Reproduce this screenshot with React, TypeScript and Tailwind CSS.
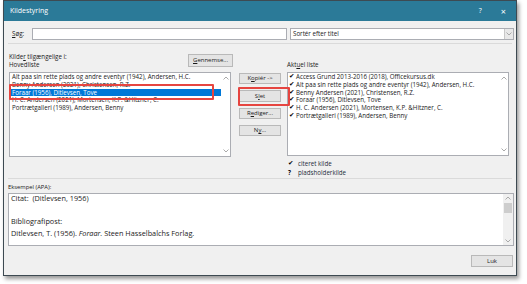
import React from 'react'

const sources = [
  'Alt paa sin rette plads og andre eventyr (1942), Andersen, H.C.',
  'Benny Andersen (2021), Christensen, R.Z.',
  'Foraar (1956), Ditlevsen, Tove',
  'H. C. Andersen (2021), Mortensen, K.P. &Hitzner, C.',
  'Portrætgalleri (1989), Andersen, Benny',
]

const current = [
  'Access Grund 2013-2016 (2018), Officekursus.dk',
  'Alt paa sin rette plads og andre eventyr (1942), Andersen, H.C.',
  'Benny Andersen (2021), Christensen, R.Z.',
  'Foraar (1956), Ditlevsen, Tove',
  'H. C. Andersen (2021), Mortensen, K.P. &Hitzner, C.',
  'Portrætgalleri (1989), Andersen, Benny',
]

const font = { fontFamily: '"Open Sans", "Noto Sans", sans-serif' }
const dejavu = { fontFamily: '"DejaVu Sans", sans-serif' }

function Chevron({ up = false }: { up?: boolean }) {
  return (
    <svg width="6" height="4" viewBox="0 0 6 4" className="block">
      <path
        d={up ? 'M0.5 3.5 L3 1 L5.5 3.5' : 'M0.5 0.5 L3 3 L5.5 0.5'}
        fill="none"
        stroke="#a0a0a0"
        strokeWidth="0.9"
      />
    </svg>
  )
}

function Btn({ children, className = '' }: { children: React.ReactNode; className?: string }) {
  return (
    <div
      className={`flex items-center justify-center border border-[#b9b9b9] bg-[#e4e4e4] text-[6px] text-[#1a1a1a] ${className}`}
    >
      {children}
    </div>
  )
}

function ScrollCol() {
  return (
    <div className="flex w-[8px] flex-col items-center justify-between py-[3px]">
      <Chevron up />
      <Chevron />
    </div>
  )
}

export default function App() {
  return (
    <div className="h-[284px] w-[527px] bg-white" style={font}>
      <div className="relative ml-[3px] flex h-[276px] w-[514px] flex-col border border-[#3d4a52] bg-[#f0f0f0] shadow-[2px_3px_4px_rgba(0,0,0,0.4)]">
        {/* title bar */}
        <div className="flex h-[20px] items-center bg-[#2b7a98] pl-[6px] pr-[10px] text-white">
          <span className="text-[7px]">Kildestyring</span>
          <span className="ml-auto text-[7px]">?</span>
          <span className="ml-[19px] text-[9px] leading-none">×</span>
        </div>

        {/* search row */}
        <div className="mt-[7px] flex h-[12px] items-stretch pl-[8px] pr-[2px]">
          <span className="flex w-[20px] items-center text-[6.2px] text-[#1a1a1a]">
            <span className="underline">S</span>øg:
          </span>
          <div className="w-[255px] border border-[#abadb3] bg-white" />
          <div className="ml-[3px] flex w-[224px] items-center border border-[#abadb3] bg-white">
            <span className="pl-[2px] text-[6.2px] text-[#1a1a1a]">Sortér efter titel</span>
            <div className="ml-auto flex h-full w-[9px] items-center justify-center border-l border-[#c8c8c8] bg-[#e8e8e8]">
              <Chevron />
            </div>
          </div>
        </div>

        <div className="mx-[4px] mt-[3px] h-px bg-[#dadada]" />

        {/* lists */}
        <div className="mt-[9px] flex text-[6.2px] text-[#1a1a1a]">
          <div className="ml-[5px] w-[222px]">
            <div className="flex h-[19px] items-start">
              <div className="leading-[8px]">
                <div>
                  Kilde<span className="underline">r</span> tilgængelige i:
                </div>
                <div>Hovedliste</div>
              </div>
              <Btn className="-mr-[2px] ml-auto mt-[1px] h-[13px] w-[45px]">
                <span>
                  <span className="underline">G</span>ennemse...
                </span>
              </Btn>
            </div>
            <div className="flex h-[85px] border border-[#abadb3] bg-white">
              <div className="flex-1 px-[1px] leading-[7.75px]">
                {sources.map((s, i) => (
                  <div
                    key={s}
                    className={`whitespace-nowrap pl-[1px] ${i === 2 ? 'bg-[#0078d7] text-white' : ''}`}
                  >
                    {s}
                  </div>
                ))}
              </div>
              <ScrollCol />
            </div>
          </div>

          <div className="ml-[8px] flex w-[42px] flex-col gap-[6px] pt-[20px]">
            <Btn className="h-[11px]">
              <span>
                K<span className="underline">o</span>piér -&gt;
              </span>
            </Btn>
            <Btn className="h-[12px]">
              <span>
                S<span className="underline">l</span>et
              </span>
            </Btn>
            <Btn className="h-[11px]">
              <span>
                R<span className="underline">e</span>diger...
              </span>
            </Btn>
            <Btn className="h-[11px]">
              <span>
                N<span className="underline">y</span>...
              </span>
            </Btn>
          </div>

          <div className="ml-[6px] w-[222px]">
            <div className="h-[19px] pt-[8px] leading-[8px]">
              Akt<span className="underline">u</span>el liste
            </div>
            <div className="flex h-[84px] border border-[#abadb3] bg-white">
              <div className="flex-1 pl-[1px] leading-[7.75px]">
                {current.map((s) => (
                  <div key={s} className="flex whitespace-nowrap">
                    <span className="w-[7px] text-[6.5px] font-bold text-black" style={dejavu}>
                      ✔
                    </span>
                    <span>{s}</span>
                  </div>
                ))}
              </div>
              <ScrollCol />
            </div>
            <div className="mt-[3px] leading-[9px] text-[#1d2b3a]">
              <div className="flex">
                <span className="w-[11px] pl-[1px] text-[6.5px] font-bold text-black" style={dejavu}>
                  ✔
                </span>
                <span>citeret kilde</span>
              </div>
              <div className="flex">
                <span className="w-[11px] pl-[1px] font-bold text-black">?</span>
                <span>pladsholderkilde</span>
              </div>
            </div>
          </div>
        </div>

        <div className="mx-[4px] mt-[1px] h-px bg-[#dadada]" />

        {/* example */}
        <div className="ml-[4px] mt-[3px] h-[11px] text-[5.8px] leading-[11px] text-[#1a1a1a]">Eksempel (APA):</div>
        <div className="ml-[4px] flex h-[53px] w-[506px] border border-[#abadb3] bg-white text-[7.3px] text-[#1a1a1a]">
          <div className="flex-1 pl-[2px]">
            <div className="leading-[9px]">Citat:&nbsp; (Ditlevsen, 1956)</div>
            <div className="h-[12px]" />
            <div className="leading-[12px]">Bibliografipost:</div>
            <div className="leading-[12px]">
              Ditlevsen, T. (1956). <i>Foraar.</i> Steen Hasselbalchs Forlag.
            </div>
          </div>
          <div className="flex w-[10px] flex-col items-center bg-[#f0f0f0] py-[2px]">
            <Chevron up />
            <div className="mt-[3px] h-[10px] w-[8px] bg-[#cdcdcd]" />
            <div className="mt-auto">
              <Chevron />
            </div>
          </div>
        </div>

        <div className="mr-[3px] mt-[9px] flex justify-end">
          <Btn className="h-[12px] w-[42px]">Luk</Btn>
        </div>

        {/* annotation boxes */}
        <div className="absolute left-[5px] top-[83px] h-[16px] w-[205px] rounded-[1px] border-2 border-[#e64540]" />
        <div className="absolute left-[234px] top-[86px] h-[19px] w-[52px] rounded-[1px] border-2 border-[#e64540]" />
      </div>
    </div>
  )
}
